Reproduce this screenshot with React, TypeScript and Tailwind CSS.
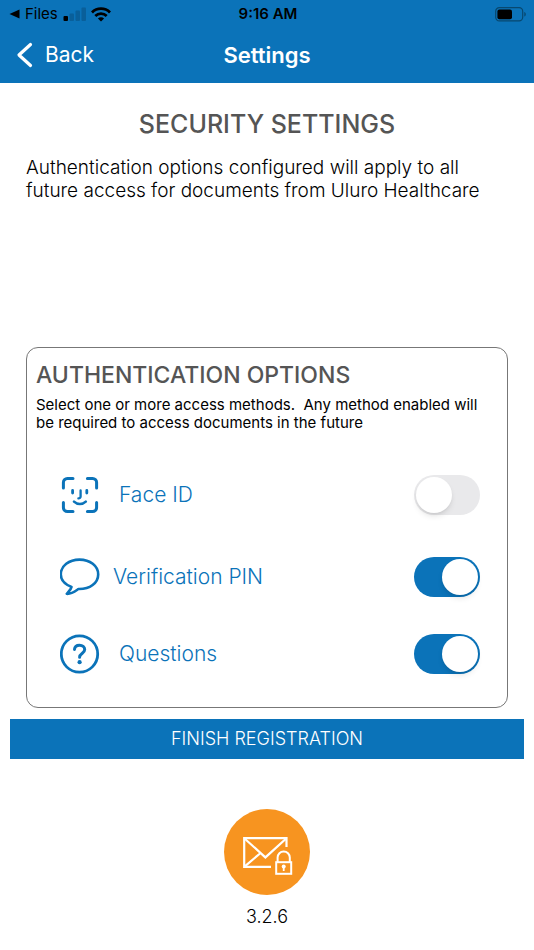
// Security settings screen: choose which authentication methods protect documents

import { useState, type ReactNode } from 'react'

type MethodId = 'face' | 'pin' | 'questions'

interface AuthMethod {
  id: MethodId
  label: string
  icon: ReactNode
  rowClass: string
  labelClass: string
}

function SignalIcon() {
  return (
    <svg viewBox="0 0 23 14" className="w-[23px] h-[14px]" aria-hidden="true">
      <rect x="0.5" y="9" width="4.5" height="5" rx="1" fill="#000" />
      <rect x="6.5" y="6.5" width="4.5" height="7.5" rx="1" fill="#095f9a" />
      <rect x="12.5" y="3.5" width="4.5" height="10.5" rx="1" fill="#095f9a" />
      <rect x="18.5" y="0.5" width="4.5" height="13.5" rx="1" fill="#095f9a" />
    </svg>
  )
}

function WifiIcon() {
  return (
    <svg viewBox="0 0 20 15" className="w-5 h-[15px]" fill="none" stroke="#000" strokeWidth="2.8" aria-hidden="true">
      <path d="M1 5.4a12.8 12.8 0 0 1 18 0" />
      <path d="M4.3 9a8.2 8.2 0 0 1 11.4 0" />
      <path d="M10 14.6 6.9 11.5a4.4 4.4 0 0 1 6.2 0z" fill="#000" stroke="none" />
    </svg>
  )
}

function BatteryIcon() {
  return (
    <svg viewBox="0 0 32 15" className="w-8 h-[15px]" aria-hidden="true">
      <rect x="0.7" y="0.7" width="27" height="13.2" rx="3.6" fill="none" stroke="#08486f" strokeWidth="1.2" />
      <rect x="2.4" y="2.4" width="14.6" height="9.8" rx="2" fill="#000" />
      <path d="M29.3 5v4.6c2-.6 2-4 0-4.6z" fill="#08486f" />
    </svg>
  )
}

function FaceIdIcon() {
  return (
    <svg viewBox="0 0 40 40" className="w-10 h-10" fill="none" stroke="#0b73b9" strokeWidth="3" strokeLinecap="round" aria-hidden="true">
      <path d="M3.4 13V7.4a4 4 0 0 1 4-4H13" />
      <path d="M27.4 3.4h5.2a4 4 0 0 1 4 4V13" />
      <path d="M36.6 27.4v5.2a4 4 0 0 1-4 4h-5.200" />
      <path d="M13 36.600H7.400a4 4 0 0 1-4-4v-5.200" />
      <path d="M12.600 15.400v2.600M26.800 15.400v2.600" strokeWidth="2.8" />
      <path d="M20.600 15.400v6a2 2 0 0 1-2.200 2" strokeWidth="2.3" />
      <path d="M14 26.600c3.400 3.200 8.400 3.200 11.800 0" strokeWidth="2.6" />
    </svg>
  )
}

function BubbleIcon() {
  return (
    <svg viewBox="0 0 40 40" className="w-10 h-10" fill="none" stroke="#0b73b9" strokeWidth="2.6" strokeLinejoin="round" aria-hidden="true">
      <path d="M19.500 2.600C9 2.600.800 9 .800 17.400c0 5.300 4.200 9.900 10.700 12.500-.4 2.200-2.600 4.200-4.700 6.900 4.600.4 7.800-2.200 11.600-4.800C30 32.300 38.200 25.800 38.200 17.400 38.200 9 30 2.600 19.500 2.600z" />
    </svg>
  )
}

function QuestionIcon() {
  return (
    <svg viewBox="0 0 40 40" className="w-10 h-10" fill="none" stroke="#0b73b9" strokeWidth="2.8" strokeLinecap="round" aria-hidden="true">
      <circle cx="19.500" cy="20" r="18.2" />
      <path d="M14.500 15.400c.2-2.700 2.300-4.200 5-4.200 3 0 5.200 1.700 5.200 4.300 0 4.100-5.100 3.900-5.100 7.700" strokeWidth="3" />
      <circle cx="19.600" cy="28.2" r="2.1" fill="#0b73b9" stroke="none" />
    </svg>
  )
}

function SecureMailLogo() {
  return (
    <svg viewBox="0 0 86 86" className="w-[86px] h-[86px]" fill="none" stroke="#fff" strokeWidth="2.2" aria-hidden="true">
      <circle cx="43" cy="43" r="43" fill="#f79420" stroke="none" />
      <path d="M62.5 38V29.200H20.200V57.800H47" />
      <path d="M20.200 29.200 41.400 48.400 62.500 29.200M20.200 57.800 36.600 44" />
      <rect x="52.2" y="53.2" width="15" height="11.6" strokeWidth="2" />
      <path d="M53.600 53v-4.400a6.100 6.100 0 0 1 12.200 0V53" strokeWidth="2" />
      <circle cx="59.7" cy="57.4" r="2" fill="#fff" stroke="none" />
      <path d="M59.700 58v4" strokeWidth="1.8" />
    </svg>
  )
}

const METHODS: AuthMethod[] = [
  { id: 'face', label: 'Face ID', icon: <FaceIdIcon />, rowClass: 'h-20', labelClass: 'pl-[19px]' },
  { id: 'pin', label: 'Verification PIN', icon: <BubbleIcon />, rowClass: 'h-[84px]', labelClass: 'pl-[13px]' },
  { id: 'questions', label: 'Questions', icon: <QuestionIcon />, rowClass: 'h-[70px]', labelClass: 'pl-[19px]' }
]

export default function App() {
  const [enabled, setEnabled] = useState<Record<MethodId, boolean>>({
    face: false,
    pin: true,
    questions: true
  })

  const toggle = (id: MethodId) => {
    setEnabled((prev) => ({ ...prev, [id]: !prev[id] }))
  }

  return (
    <div className="min-h-screen bg-white font-['Inter',sans-serif] text-black">
      <header className="bg-[#0b73b9]">
        {/* Status bar */}
        <div className="grid grid-cols-[1fr_auto_1fr] items-center h-7 pl-[9px] pr-[7px]">
          <div className="flex items-center">
            <svg viewBox="0 0 11 10" className="w-[11px] h-[10px]" aria-hidden="true">
              <path d="M0.5 5 10.5 0.5v9z" fill="#000" />
            </svg>
            <span className="px-[5px] text-[15px] leading-5">Files</span>
            <SignalIcon />
            <span className="pl-[5px]">
              <WifiIcon />
            </span>
          </div>
          <span className="text-[15px] leading-5 font-semibold">9:16 AM</span>
          <div className="flex justify-end">
            <BatteryIcon />
          </div>
        </div>

        {/* Navigation bar */}
        <div className="grid grid-cols-[1fr_auto_1fr] items-center h-[55px] px-4 pb-px">
          <button type="button" className="flex items-center gap-3 text-[21px] leading-7 text-white">
            <svg viewBox="0 0 17 26" className="w-[17px] h-[26px]" fill="none" stroke="#fff" strokeWidth="3.2" strokeLinecap="round" strokeLinejoin="round" aria-hidden="true">
              <path d="M14.5 2.5 3 13l11.5 10.5" />
            </svg>
            Back
          </button>
          <h1 className="text-[22px] leading-7 font-semibold text-white">Settings</h1>
        </div>
      </header>

      <main>
        <section className="px-[26px] pt-[25px] h-[264px]">
          <h2 className="text-center text-[25px] leading-8 font-medium text-[#555]">SECURITY SETTINGS</h2>
          <p className="pt-4 text-[19px] leading-[23px] font-light">
            Authentication options configured will apply to all
            <br />
            future access for documents from Uluro Healthcare
          </p>
        </section>

        <section className="mx-[26px] pt-[11px] pb-[18px] border border-[#777] rounded-xl">
          <h2 className="px-[9px] text-[23px] leading-8 font-medium text-[#555]">AUTHENTICATION OPTIONS</h2>
          <p className="px-[9px] pt-[5px] pb-[23px] text-[15px] leading-[18px]">
            Select one or more access methods.&nbsp; Any method enabled will
            <br />
            be required to access documents in the future
          </p>

          {METHODS.map((method) => (
            <div key={method.id} className={`flex items-center pl-[33px] pr-[27px] ${method.rowClass}`}>
              {method.icon}
              <label htmlFor={method.id} className={`flex-1 text-[21px] leading-7 font-light text-[#0b73b9] ${method.labelClass}`}>
                {method.label}
              </label>
              <input
                id={method.id}
                type="checkbox"
                role="switch"
                checked={enabled[method.id]}
                onChange={() => toggle(method.id)}
                className="appearance-none w-[66px] h-10 p-0.5 rounded-full bg-[#e9e9eb] checked:bg-[#0b73b9] before:block before:w-9 before:h-9 before:rounded-full before:bg-white before:shadow-md checked:before:ml-[26px]"
              />
            </div>
          ))}
        </section>

        <div className="px-[10px] pt-[11px]">
          <button type="button" className="w-full h-10 bg-[#0b73b9] text-[18px] leading-6 font-light text-white">
            FINISH REGISTRATION
          </button>
        </div>
      </main>

      <footer className="flex flex-col items-center pt-[50px]">
        <SecureMailLogo />
        <p className="pt-[10px] text-[18px] leading-6 font-light">3.2.6</p>
      </footer>
    </div>
  )
}
